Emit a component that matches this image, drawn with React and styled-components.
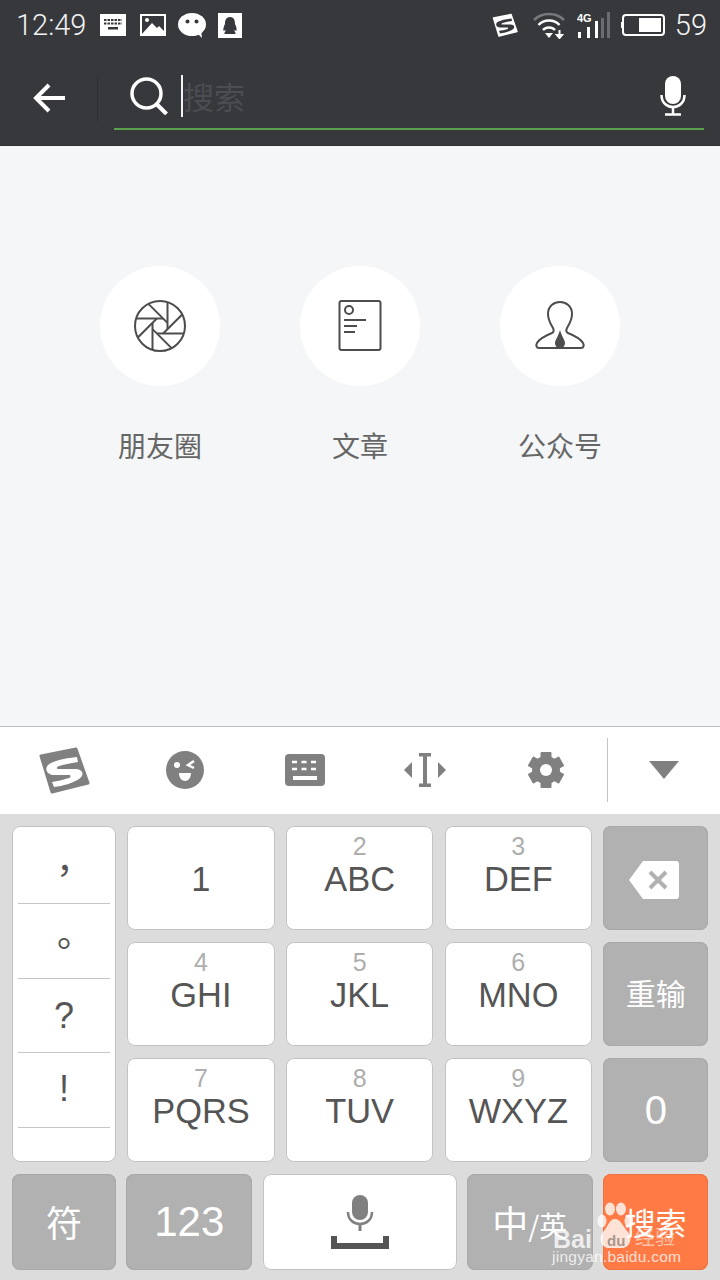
import React from 'react';
import styled, { createGlobalStyle } from 'styled-components';

const CJK = '"Noto Sans CJK SC", "Liberation Sans", sans-serif';
const LATIN = '"Liberation Sans", "Noto Sans CJK SC", sans-serif';

const GlobalStyle = createGlobalStyle`
  html, body {
    margin: 0;
    padding: 0;
    background: #f4f6f7;
  }
`;

const Screen = styled.div`
  position: relative;
  display: flex;
  flex-direction: column;
  width: 720px;
  height: 1280px;
  overflow: hidden;
  font-family: ${LATIN};
`;

const TopArea = styled.header`
  flex: none;
  height: 146px;
  background: #36383c;
  border-bottom: 1px solid #2f3134;
  box-sizing: border-box;
`;

const StatusBar = styled.div`
  display: flex;
  align-items: center;
  justify-content: space-between;
  height: 50px;
  padding: 0 13px 0 16px;
`;

const StatusGroup = styled.div`
  display: flex;
  align-items: center;
`;

const StatusText = styled.span`
  margin-left: ${({ $gap }) => $gap || 0}px;
  font-family: Roboto, sans-serif;
  font-weight: 300;
  font-size: 29px;
  line-height: 50px;
  color: #f2f2f2;
`;

const StatusIcon = styled.svg`
  display: block;
  flex: none;
  margin-left: ${({ $gap }) => $gap || 0}px;
`;

const SearchBar = styled.div`
  display: flex;
  align-items: flex-start;
  height: 96px;
`;

const BackCell = styled.div`
  flex: none;
  display: flex;
  align-items: center;
  width: 98px;
  height: 48px;
  margin-top: 24px;
  padding-left: 33px;
  box-sizing: border-box;
  border-right: 1px solid #2e3033;
`;

const SearchField = styled.div`
  flex: none;
  display: flex;
  align-items: center;
  width: 590px;
  height: 62px;
  margin: 18px 0 0 16px;
  padding: 0 18px 4px 16px;
  box-sizing: border-box;
  border-bottom: 2px solid #5a9f4c;
`;

const Caret = styled.span`
  flex: none;
  width: 2px;
  height: 42px;
  margin-left: 13px;
  background: #f2f2f2;
`;

const Placeholder = styled.span`
  flex: 1;
  font-family: ${CJK};
  font-size: 31px;
  line-height: 42px;
  color: #4b4d51;
`;

const Content = styled.main`
  flex: 1;
  display: flex;
  justify-content: center;
  gap: 80px;
  padding-top: 120px;
  background: #f4f6f7;
`;

const Shortcut = styled.div`
  display: flex;
  flex-direction: column;
  align-items: center;
  width: 120px;
`;

const ShortcutCircle = styled.div`
  display: flex;
  align-items: center;
  justify-content: center;
  width: 120px;
  height: 120px;
  border-radius: 50%;
  background: #fff;
`;

const ShortcutLabel = styled.span`
  margin-top: 41px;
  font-family: ${CJK};
  font-size: 28px;
  line-height: 36px;
  color: #666;
  white-space: nowrap;
`;

const Toolbar = styled.div`
  flex: none;
  display: grid;
  grid-template-columns: repeat(5, 120.4px) 1fr;
  align-items: center;
  height: 88px;
  padding: 0 0 1px 4px;
  box-sizing: border-box;
  background: #fff;
  border-top: 1px solid #bdbdbd;
`;

const ToolCell = styled.div`
  display: flex;
  align-items: center;
  justify-content: center;
  height: 64px;
  margin-left: ${({ $divider }) => ($divider ? 1 : 0)}px;
  border-left: ${({ $divider }) => ($divider ? '1px solid #c4c4c4' : 'none')};
`;

const Keyboard = styled.div`
  flex: none;
  display: flex;
  flex-direction: column;
  gap: 12px;
  height: 466px;
  padding: 12px 12px 0;
  box-sizing: border-box;
  background: #dcdcdc;
`;

const KeyGrid = styled.div`
  display: grid;
  grid-template-columns: 104px 147.5px 147.5px 147.5px 105px;
  grid-auto-rows: 104px;
  gap: 12px 11.2px;
`;

const BottomRow = styled.div`
  display: grid;
  grid-template-columns: 104px 126px 194px 126px 105px;
  height: 96px;
  column-gap: 10.25px;
`;

const SymbolColumn = styled.div`
  grid-row: span 3;
  display: flex;
  flex-direction: column;
  padding: 0 6px;
  background: #fff;
  border-radius: 8px;
  box-shadow: inset 0 0 0 1px #c2c2c2;
`;

const SymbolCell = styled.div`
  flex: none;
  display: flex;
  align-items: center;
  justify-content: center;
  height: ${({ $height }) => $height}px;
  box-sizing: border-box;
  border-bottom: 1px solid #c6c6c6;
`;

const SymbolText = styled.span`
  font-family: ${({ $cjk }) => ($cjk ? CJK : LATIN)};
  font-size: 36px;
  line-height: 40px;
  color: #555;
  transform: translate(${({ $x }) => $x || 0}px, ${({ $y }) => $y || 0}px);
`;

const Key = styled.div`
  display: flex;
  flex-direction: column;
  align-items: center;
  justify-content: ${({ $center }) => ($center ? 'center' : 'flex-start')};
  padding-top: ${({ $center }) => ($center ? 0 : 8)}px;
  box-sizing: border-box;
  border-radius: 8px;
  background: ${({ $tone }) =>
    $tone === 'gray' ? '#b1b1b1' : $tone === 'orange' ? '#ff7a45' : '#fff'};
  box-shadow: inset 0 0 0 1px
    ${({ $tone }) =>
      $tone === 'gray' ? '#a9a9a9' : $tone === 'orange' ? '#ec7240' : '#c2c2c2'};
  color: ${({ $tone }) => ($tone ? '#fff' : '#555')};
`;

const KeyHint = styled.span`
  height: 24px;
  font-size: 25px;
  line-height: 24px;
  color: #aeaeae;
`;

const KeyMain = styled.span`
  height: 42px;
  font-size: 34.4px;
  line-height: 42px;
  white-space: nowrap;
`;

const KeyLabel = styled.span`
  font-family: ${({ $cjk }) => ($cjk ? CJK : LATIN)};
  font-size: ${({ $size }) => $size}px;
  line-height: 1.2;
  white-space: nowrap;
  transform: translateY(${({ $y }) => $y || 0}px);
`;

const SmallPart = styled.span`
  font-size: 28px;
`;

const BackspaceGlyph = styled.svg`
  display: block;
  transform: translate(-2px, 2px);
`;

const Watermark = styled.div`
  position: absolute;
  left: 552px;
  top: 1202px;
  width: 132px;
  color: rgba(255, 255, 255, 0.78);
`;

const WatermarkLogo = styled.div`
  display: flex;
  align-items: flex-end;
  height: 48px;
`;

const WatermarkBai = styled.span`
  flex: none;
  font-weight: 700;
  font-size: 25px;
  line-height: 28px;
  margin: 0 0 -3px 1px;
`;

const PawMark = styled.svg`
  flex: none;
  display: block;
  margin-left: 5px;
`;

const WatermarkTag = styled.span`
  flex: none;
  font-family: ${CJK};
  font-size: 20px;
  line-height: 26px;
  margin-left: 2px;
  opacity: 0.7;
`;

const WatermarkUrl = styled.div`
  margin-top: -3px;
  font-size: 15.5px;
  line-height: 20px;
  letter-spacing: 0.25px;
  white-space: nowrap;
`;

const SogouMark = ({ width, height, fill, cut, gap }) => (
  <StatusIcon $gap={gap} width={width} height={height} viewBox="7 4 52 48">
    <path
      d="M10 14 L45 7 L57 41 L21 50 Z"
      fill={fill}
      stroke={fill}
      strokeWidth="3"
      strokeLinejoin="round"
    />
    <path
      d="M46 15 C36 16 26 18 20 21 C13 24 14 32 22 33 L38 33 C40 33 40 35 38 36 C32 38 26 39 21 40 L23 45 C32 44 42 41 48 37 C54 33 52 27 44 27 L28 27 C25 27 25 25 28 24 C34 22 41 21 47 20 Z"
      fill={cut}
    />
  </StatusIcon>
);

const KeyboardStatusIcon = () => (
  <StatusIcon $gap={14} width="26" height="22" viewBox="0 0 26 22">
    <rect width="26" height="22" fill="#fff" />
    <path d="M4 6h18M4 9.5h18" stroke="#36383c" strokeWidth="2" strokeDasharray="2.5 1" />
    <rect x="8" y="13" width="10" height="2.5" fill="#36383c" />
  </StatusIcon>
);

const ImageStatusIcon = () => (
  <StatusIcon $gap={14} width="26" height="22" viewBox="0 0 26 22">
    <rect x="1" y="1" width="24" height="20" fill="#36383c" stroke="#fff" strokeWidth="2" />
    <circle cx="7" cy="6" r="2" fill="#fff" />
    <path d="M1 21 L12 9 L17 14 L19 12 L25 18 V21 Z" fill="#fff" />
  </StatusIcon>
);

const WechatStatusIcon = () => (
  <StatusIcon $gap={12} width="28" height="25" viewBox="0 0 28 25">
    <ellipse cx="14" cy="11.5" rx="14" ry="11.5" fill="#fff" />
    <path d="M19 20 L24 25 L23 17 Z" fill="#fff" />
    <circle cx="9.5" cy="8.5" r="2" fill="#36383c" />
    <circle cx="18.5" cy="8.5" r="2" fill="#36383c" />
  </StatusIcon>
);

const QQStatusIcon = () => (
  <StatusIcon $gap={12} width="24" height="25" viewBox="0 0 24 25">
    <rect width="24" height="25" fill="#fff" />
    <path
      d="M12 4 C7.5 4 7 8 7 11 C6 13 5 15 5.5 18 L7.5 17 C8 19 5 20 7 21 H17 C19 20 16 19 16.5 17 L18.5 18 C19 15 18 13 17 11 C17 8 16.5 4 12 4 Z"
      fill="#36383c"
    />
  </StatusIcon>
);

const WifiIcon = () => (
  <StatusIcon $gap={15} width="32" height="28" viewBox="0 0 32 28">
    <path d="M1 9 C9 1 23 1 31 9" fill="none" stroke="#77797c" strokeWidth="2.5" />
    <path d="M5.5 14 C11 8 21 8 26.5 14" fill="none" stroke="#fff" strokeWidth="2.5" />
    <path d="M10 19 C13 15.5 19 15.5 22 19" fill="none" stroke="#fff" strokeWidth="2.5" />
    <path d="M12 22 H20 L16 27 Z" fill="#fff" />
    <path d="M26.5 19 V23 M24 24 L26.5 27 L29 24 Z" fill="#fff" stroke="#fff" strokeWidth="2" />
  </StatusIcon>
);

const SignalIcon = () => (
  <StatusIcon $gap={12} width="33" height="26" viewBox="0 0 33 26">
    <text x="0" y="10" fontFamily={LATIN} fontSize="11" fontWeight="700" fill="#fff">
      4G
    </text>
    <rect x="1" y="20" width="3" height="6" fill="#fff" />
    <rect x="10" y="15" width="3" height="11" fill="#fff" />
    <rect x="18" y="9" width="3" height="17" fill="#fff" />
    <rect x="24" y="6" width="3" height="20" fill="#6a6c6f" />
    <rect x="30" y="0" width="3" height="26" fill="#6a6c6f" />
  </StatusIcon>
);

const BatteryIcon = () => (
  <StatusIcon $gap={11} width="44" height="22" viewBox="0 0 44 22">
    <rect x="2" y="1" width="41" height="20" rx="3" fill="none" stroke="#fff" strokeWidth="2" />
    <rect x="0" y="8" width="2" height="6" fill="#fff" />
    <rect x="18" y="4" width="22" height="14" fill="#fff" />
  </StatusIcon>
);

const BackArrow = () => (
  <svg width="32" height="30" viewBox="0 0 32 30">
    <path d="M32 15 H3 M16 2 L3 15 L16 28" fill="none" stroke="#fff" strokeWidth="4" />
  </svg>
);

const SearchIcon = () => (
  <StatusIcon width="38" height="38" viewBox="0 0 38 38">
    <circle cx="16.5" cy="16.5" r="14.5" fill="none" stroke="#fff" strokeWidth="3.5" />
    <path d="M26.5 27 L36.5 37" stroke="#fff" strokeWidth="4" />
  </StatusIcon>
);

const MicIcon = () => (
  <StatusIcon width="26" height="40" viewBox="0 0 26 40">
    <rect x="5" y="0" width="16" height="28" rx="8" fill="#fff" />
    <path d="M1.5 19 C1.5 35 24.5 35 24.5 19" fill="none" stroke="#fff" strokeWidth="2.5" />
    <path d="M13 31 V38" stroke="#fff" strokeWidth="2.5" />
    <path d="M5 38.5 H21" stroke="#fff" strokeWidth="2.5" />
  </StatusIcon>
);

const ApertureIcon = () => (
  <svg width="54" height="54" viewBox="-27 -27 54 54">
    <g fill="none" stroke="#4d4d4d" strokeWidth="2">
      <circle r="25" />
      {[0, 45, 90, 135, 180, 225, 270, 315].map((angle) => (
        <path key={angle} d="M-23.85 -7.5 H3.1" transform={`rotate(${angle})`} />
      ))}
    </g>
  </svg>
);

const ArticleIcon = () => (
  <svg width="44" height="52" viewBox="0 0 44 52">
    <g fill="none" stroke="#4d4d4d" strokeWidth="2">
      <rect x="1.5" y="1" width="41" height="49" rx="2" />
      <circle cx="11" cy="10" r="4" />
      <path d="M6 20 H28 M6 26 H19 M6 32 H17" />
    </g>
  </svg>
);

const AccountIcon = () => (
  <svg width="50" height="50" viewBox="0 0 50 50">
    <path
      d="M4 47 H46 C49 47 49 44 48 42 C45 37 38 34 33 32 C31 31 31 29 32 27 C35 22 37 19 37 13 C37 5 31 1 25 1 C19 1 13 5 13 13 C13 19 15 22 18 27 C19 29 19 31 17 32 C12 34 5 37 2 42 C1 44 1 47 4 47 Z"
      fill="#fff"
      stroke="#4d4d4d"
      strokeWidth="2"
    />
    <path d="M25 29 C23 36 20 39 20 42 C20 45 22 47 25 47 C28 47 30 45 30 42 C30 39 27 36 25 29 Z" fill="#4d4d4d" />
  </svg>
);

const EmojiIcon = () => (
  <svg width="38" height="38" viewBox="0 0 38 38">
    <circle cx="19" cy="19" r="19" fill="#808080" />
    <circle cx="11" cy="14" r="3" fill="#fff" />
    <path d="M28 10 L22 14 L28 17" fill="none" stroke="#fff" strokeWidth="2.5" />
    <path d="M13 22 H25 C25 27 22 30 19 30 C16 30 13 27 13 22 Z" fill="#fff" />
  </svg>
);

const KeyboardToolIcon = () => (
  <svg width="40" height="32" viewBox="0 0 40 32">
    <rect width="40" height="32" rx="4" fill="#808080" />
    <path d="M7 8 H33 M7 15 H33" stroke="#fff" strokeWidth="2.5" strokeDasharray="5 4.5" />
    <rect x="8" y="22" width="24" height="4" fill="#fff" />
  </svg>
);

const CursorIcon = () => (
  <svg width="42" height="34" viewBox="0 0 42 34">
    <path d="M15 0 H27 V3.5 H23 V30.5 H27 V34 H15 V30.5 H19 V3.5 H15 Z" fill="#808080" />
    <path d="M0 17 L8 9 V25 Z M42 17 L34 9 V25 Z" fill="#808080" />
  </svg>
);

const GearIcon = () => (
  <svg width="36" height="36" viewBox="-18 -18 36 36">
    <g fill="#808080">
      <circle r="14" />
      {[0, 60, 120, 180, 240, 300].map((angle) => (
        <rect key={angle} x="-5.5" y="-18" width="11" height="8" rx="1" transform={`rotate(${angle})`} />
      ))}
    </g>
    <circle r="6" fill="#fff" />
  </svg>
);

const DropIcon = () => (
  <svg width="30" height="18" viewBox="0 0 30 18">
    <path d="M0 0 H30 L15 18 Z" fill="#808080" />
  </svg>
);

const BackspaceIcon = () => (
  <BackspaceGlyph width="50" height="38" viewBox="0 0 50 38">
    <path d="M14 0 H47 C49 0 50 1 50 3 V35 C50 37 49 38 47 38 H14 L0 19 Z" fill="#fff" />
    <path d="M21 11 L37 27 M37 11 L21 27" stroke="#b1b1b1" strokeWidth="4" />
  </BackspaceGlyph>
);

const SpaceMicIcon = () => (
  <svg width="58" height="56" viewBox="0 0 58 56">
    <rect x="21" y="1" width="16" height="25" rx="8" fill="#808080" />
    <path d="M17 18 C17 34 41 34 41 18" fill="none" stroke="#808080" strokeWidth="2.5" />
    <path d="M29 29 V37" stroke="#808080" strokeWidth="3" />
    <path d="M3 42 V52 H55 V42" fill="none" stroke="#555" strokeWidth="6" />
  </svg>
);

const PawIcon = () => (
  <PawMark width="36" height="48" viewBox="0 0 36 48">
    <g fill="currentColor">
      <ellipse cx="5" cy="19" rx="4.5" ry="6.5" />
      <ellipse cx="13" cy="7" rx="5" ry="6.5" />
      <ellipse cx="24" cy="7" rx="5" ry="6.5" />
      <ellipse cx="32" cy="19" rx="4.5" ry="6.5" />
      <path d="M18 17 C12 17 11 25 6 30 C1 36 4 46 12 46 H25 C33 46 36 36 31 30 C26 25 24 17 18 17 Z" />
    </g>
    <text x="10" y="44" fontFamily={LATIN} fontSize="15" fontWeight="700" fill="#a8968c">
      du
    </text>
  </PawMark>
);

const shortcuts = [
  { label: '朋友圈', icon: <ApertureIcon /> },
  { label: '文章', icon: <ArticleIcon /> },
  { label: '公众号', icon: <AccountIcon /> },
];

const symbols = [
  { text: '，', height: 78, x: 10, y: -8, cjk: true },
  { text: '。', height: 75, x: 11, y: -10, cjk: true },
  { text: '?', height: 74 },
  { text: '!', height: 75, y: -1 },
];

const digitRows = [
  [
    { main: '1' },
    { hint: '2', main: 'ABC' },
    { hint: '3', main: 'DEF' },
  ],
  [
    { hint: '4', main: 'GHI' },
    { hint: '5', main: 'JKL' },
    { hint: '6', main: 'MNO' },
  ],
  [
    { hint: '7', main: 'PQRS' },
    { hint: '8', main: 'TUV' },
    { hint: '9', main: 'WXYZ' },
  ],
];

const sideKeys = [
  <BackspaceIcon key="del" />,
  <KeyLabel key="reset" $cjk $size={30} $y={-2}>
    重输
  </KeyLabel>,
  <KeyLabel key="zero" $size={40}>
    0
  </KeyLabel>,
];

const DigitKey = ({ hint, main }) => (
  <Key>
    <KeyHint>{hint}</KeyHint>
    <KeyMain>{main}</KeyMain>
  </Key>
);

const App = () => (
  <Screen>
    <GlobalStyle />
    <TopArea>
      <StatusBar>
        <StatusGroup>
          <StatusText>12:49</StatusText>
          <KeyboardStatusIcon />
          <ImageStatusIcon />
          <WechatStatusIcon />
          <QQStatusIcon />
        </StatusGroup>
        <StatusGroup>
          <SogouMark width={26} height={24} fill="#fff" cut="#36383c" />
          <WifiIcon />
          <SignalIcon />
          <BatteryIcon />
          <StatusText $gap={10}>59</StatusText>
        </StatusGroup>
      </StatusBar>
      <SearchBar>
        <BackCell>
          <BackArrow />
        </BackCell>
        <SearchField>
          <SearchIcon />
          <Caret />
          <Placeholder>搜索</Placeholder>
          <MicIcon />
        </SearchField>
      </SearchBar>
    </TopArea>

    <Content>
      {shortcuts.map(({ label, icon }) => (
        <Shortcut key={label}>
          <ShortcutCircle>{icon}</ShortcutCircle>
          <ShortcutLabel>{label}</ShortcutLabel>
        </Shortcut>
      ))}
    </Content>

    <Toolbar>
      <ToolCell>
        <SogouMark width={52} height={48} fill="#808080" cut="#fff" />
      </ToolCell>
      <ToolCell>
        <EmojiIcon />
      </ToolCell>
      <ToolCell>
        <KeyboardToolIcon />
      </ToolCell>
      <ToolCell>
        <CursorIcon />
      </ToolCell>
      <ToolCell>
        <GearIcon />
      </ToolCell>
      <ToolCell $divider>
        <DropIcon />
      </ToolCell>
    </Toolbar>

    <Keyboard>
      <KeyGrid>
        <SymbolColumn>
          {symbols.map(({ text, height, x, y, cjk }) => (
            <SymbolCell key={text} $height={height}>
              <SymbolText $cjk={cjk} $x={x} $y={y}>
                {text}
              </SymbolText>
            </SymbolCell>
          ))}
        </SymbolColumn>
        {digitRows.map((row, index) => (
          <React.Fragment key={index}>
            {row.map((key) => (
              <DigitKey key={key.main} {...key} />
            ))}
            <Key $tone="gray" $center>
              {sideKeys[index]}
            </Key>
          </React.Fragment>
        ))}
      </KeyGrid>
      <BottomRow>
        <Key $tone="gray" $center>
          <KeyLabel $cjk $size={36}>
            符
          </KeyLabel>
        </Key>
        <Key $tone="gray" $center>
          <KeyLabel $size={42}>123</KeyLabel>
        </Key>
        <Key $center>
          <SpaceMicIcon />
        </Key>
        <Key $tone="gray" $center>
          <KeyLabel $cjk $size={36}>
            中<SmallPart>/英</SmallPart>
          </KeyLabel>
        </Key>
        <Key $tone="orange" $center>
          <KeyLabel $cjk $size={31}>
            搜索
          </KeyLabel>
        </Key>
      </BottomRow>
    </Keyboard>

    <Watermark>
      <WatermarkLogo>
        <WatermarkBai>Bai</WatermarkBai>
        <PawIcon />
        <WatermarkTag>经验</WatermarkTag>
      </WatermarkLogo>
      <WatermarkUrl>jingyan.baidu.com</WatermarkUrl>
    </Watermark>
  </Screen>
);

export default App;
